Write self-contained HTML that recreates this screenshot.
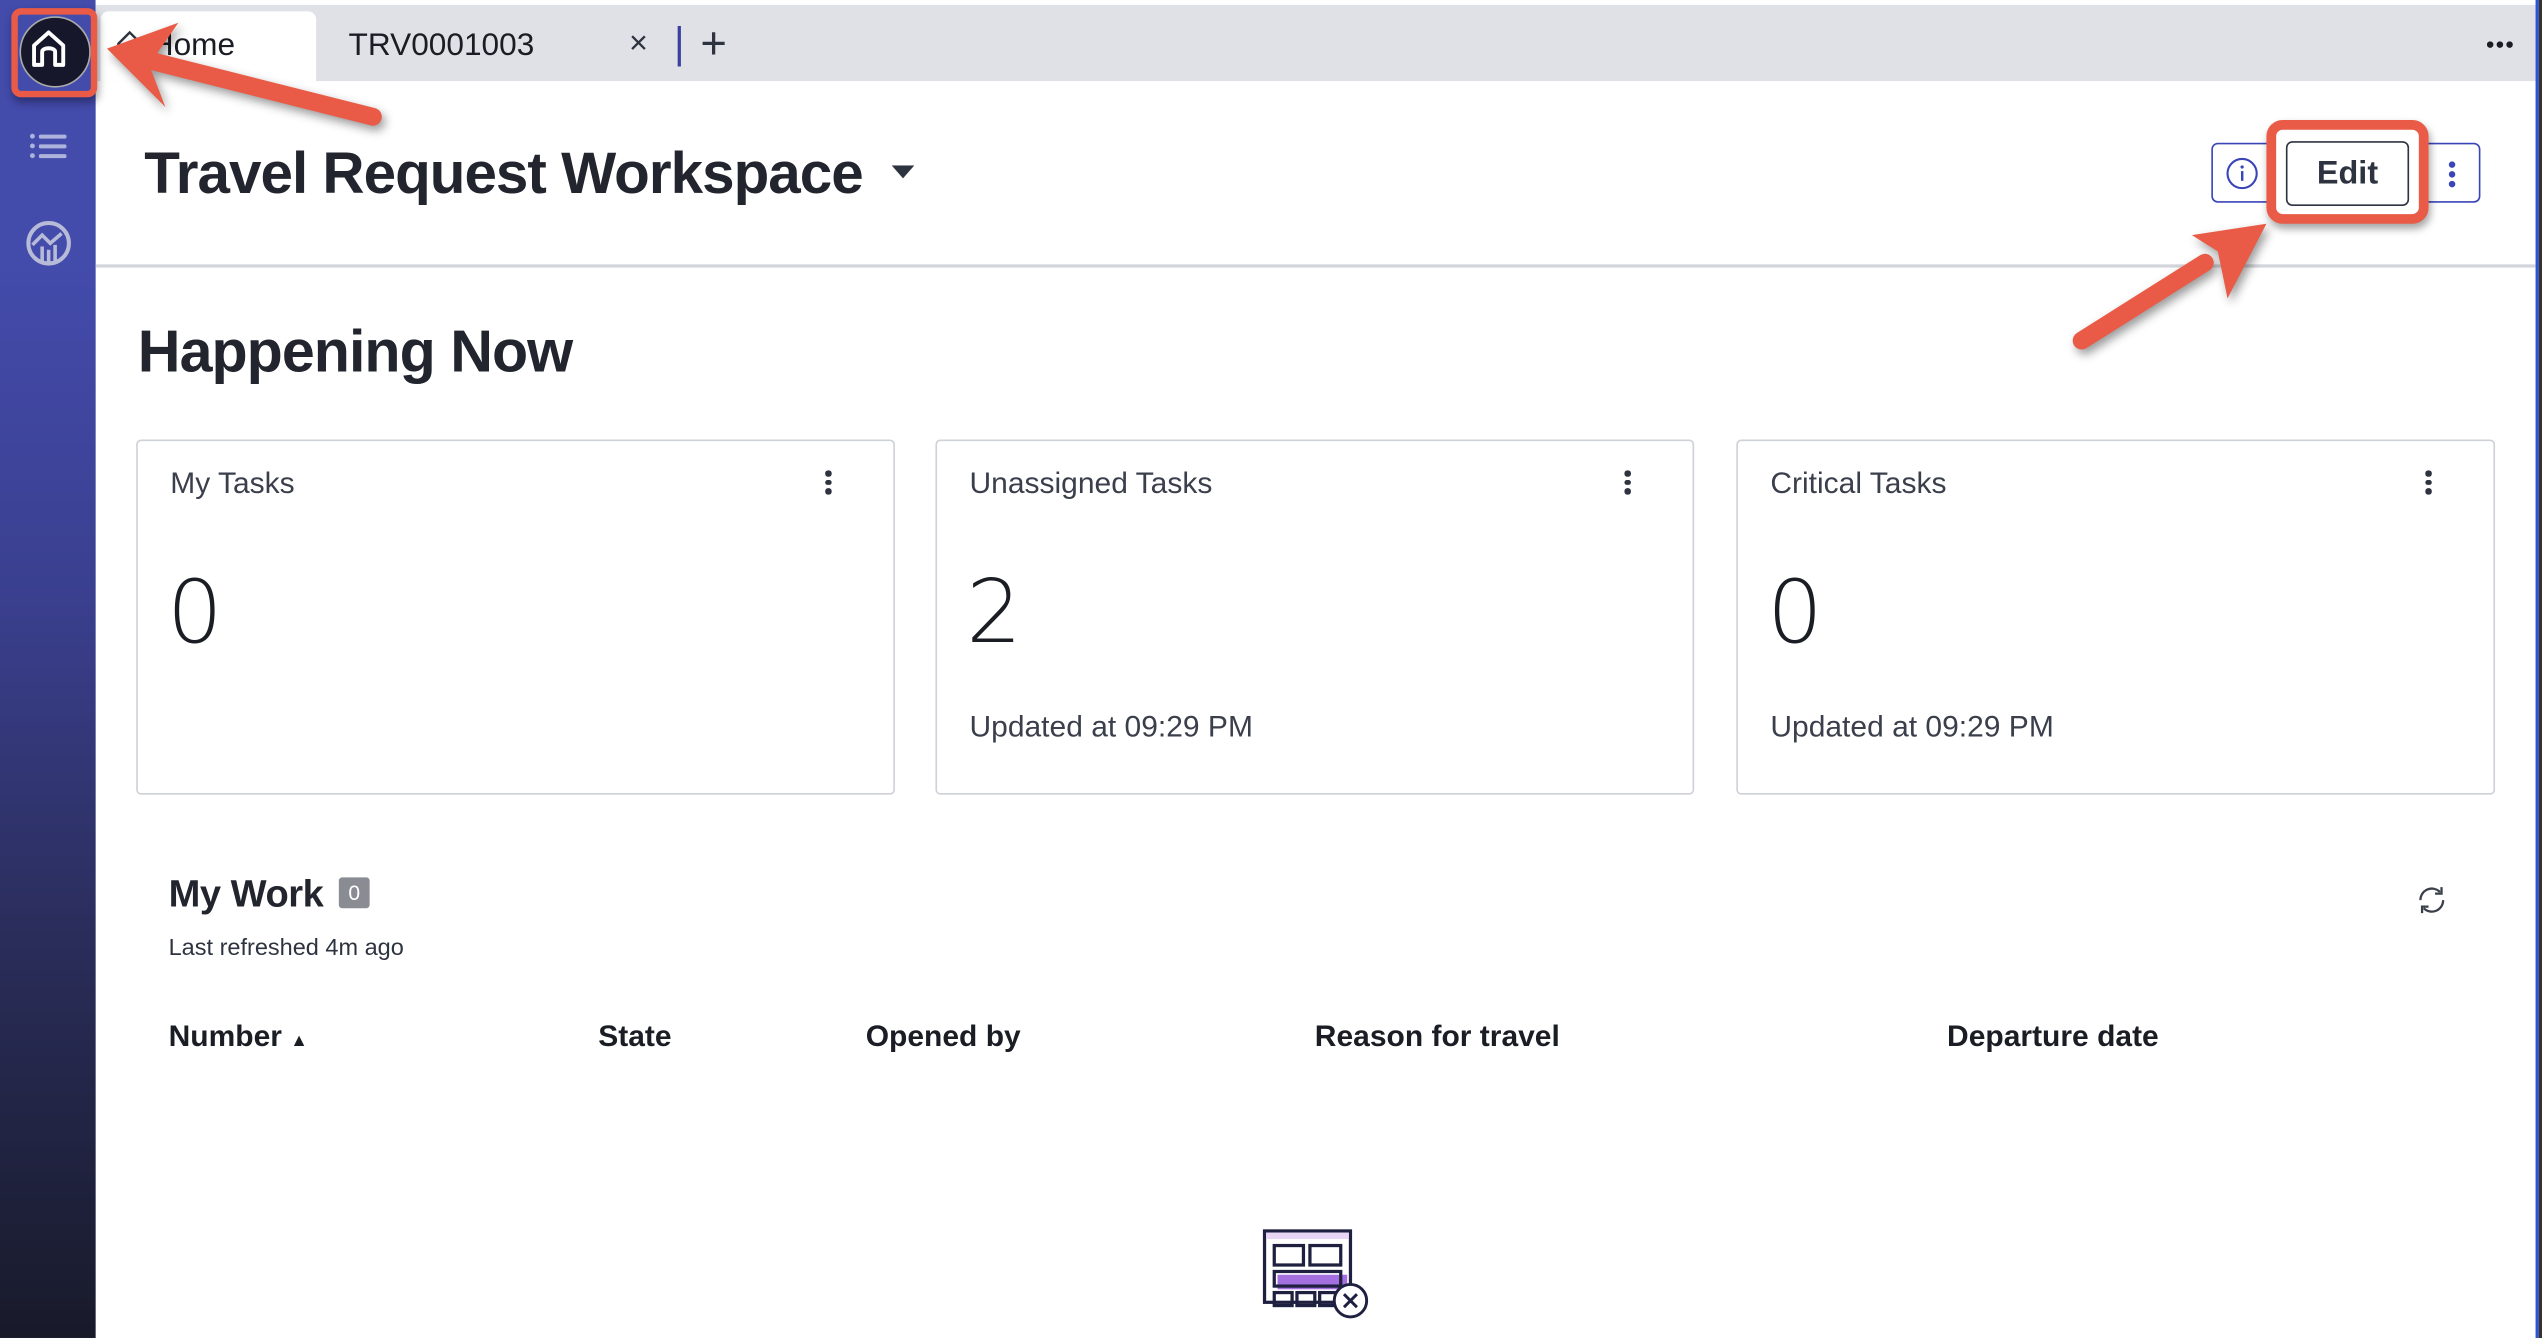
<!DOCTYPE html>
<html><head><meta charset="utf-8"><style>
html,body{margin:0;padding:0;width:2542px;height:1338px;overflow:hidden;background:#fff}
#w{position:absolute;left:0;top:0;width:1568px;height:825px;transform:scale(1.6212,1.6218);transform-origin:0 0;font-family:"Liberation Sans",sans-serif;color:#2e3340}
.a{position:absolute}
.card{position:absolute;top:271px;width:466px;height:217px;border:1px solid #cfd1d8;border-radius:3px;background:#fff}
.card .t{position:absolute;left:20px;top:15px;font-size:18.5px;color:#3a3f4b}
.card .n{position:absolute;left:18px;top:74px;font-size:54px;font-family:"DejaVu Sans","Liberation Sans",sans-serif;font-weight:200;color:#1b1d24}
.card .u{position:absolute;left:20px;top:165px;font-size:18.5px;color:#3a3f4b}
.card .d{position:absolute;right:38px;top:18px;width:4px}
.dots i{display:block;width:3.5px;height:3.5px;border-radius:50%;background:#2e3340;margin-bottom:2px}
.h{position:absolute;top:628px;font-size:18.5px;font-weight:bold;color:#1b1d24}
</style></head><body><div id="w">
<div class="a" style="left:0;top:0;width:59px;height:825px;background:linear-gradient(#434bab 0%,#434bab 20%,#3a3f8e 45%,#2a2d5a 70%,#181a2a 100%)"></div>
<div class="a" style="left:59px;top:0;width:1506px;height:3px;background:#fff"></div>
<div class="a" style="left:59px;top:3px;width:1506px;height:47px;background:#e0e1e7"></div>
<div class="a" style="left:1564px;top:0;width:2px;height:825px;background:#2f54d0"></div>
<div class="a" style="left:1566px;top:0;width:2px;height:825px;background:#333"></div>
<div class="a" style="left:62px;top:7px;width:133px;height:43px;background:#fff;border-radius:5px 5px 0 0"></div>
<svg class="a" style="left:70px;top:18px" width="20" height="20" viewBox="0 0 20 20"><path d="M3 18V9L10 2l7 7v9" fill="none" stroke="#2e3340" stroke-width="1.5"/></svg>
<div class="a" style="left:93px;top:17px;font-size:19.5px;color:#1b1d24">Home</div>
<div class="a" style="left:215px;top:17px;font-size:19.5px;color:#1b1d24">TRV0001003</div>
<div class="a" style="left:388px;top:16px;font-size:20px;color:#2e3340">×</div>
<div class="a" style="left:418px;top:16px;width:2px;height:25px;background:#3a40a0"></div>
<div class="a" style="left:432px;top:11px;font-size:28px;font-weight:300;color:#2e3340">+</div>
<svg class="a" style="left:1534px;top:25px" width="16" height="5"><g fill="#1b1d24"><circle cx="2" cy="2.5" r="2"/><circle cx="8" cy="2.5" r="2"/><circle cx="14" cy="2.5" r="2"/></g></svg>
<!-- sidebar icons -->
<div class="a" style="left:12px;top:10px;width:42px;height:42px;border-radius:50%;background:#16172a;border:1px solid #aaa"></div>
<svg class="a" style="left:16px;top:16px" width="28" height="28" viewBox="0 0 28 28"><path d="M5 24V12L14 4l9 8v12h-5v-8c0-3-8-3-8 0v8z" fill="none" stroke="#fff" stroke-width="2.4" stroke-linejoin="round"/></svg>
<svg class="a" style="left:17px;top:80px" width="26" height="20" viewBox="0 0 26 20"><g fill="#aeb3dd"><circle cx="3" cy="4" r="1.5"/><circle cx="3" cy="10" r="1.5"/><circle cx="3" cy="16" r="1.5"/><rect x="7" y="3" width="17" height="2.5" rx="1"/><rect x="7" y="9" width="17" height="2.5" rx="1"/><rect x="7" y="15" width="17" height="2.5" rx="1"/></g></svg>
<svg class="a" style="left:15px;top:135px" width="30" height="30" viewBox="0 0 30 30"><circle cx="15" cy="15" r="12.5" fill="none" stroke="#b8bbd8" stroke-width="2.5"/><path d="M5 16l6-6 5 5 7-6M11 26v-9M15 27v-8M19 26v-10" fill="none" stroke="#b8bbd8" stroke-width="2.2"/></svg>
<!-- title -->
<div class="a" style="left:89px;top:86px;font-size:36px;font-weight:bold;color:#22252e;letter-spacing:-0.6px">Travel Request Workspace</div>
<svg class="a" style="left:550px;top:102px" width="14" height="9"><path d="M0 0h14L7 8z" fill="#2e3340"/></svg>
<div class="a" style="left:59px;top:163px;width:1505px;height:2px;background:#d4d5dc"></div>
<!-- buttons -->
<div class="a" style="left:1364px;top:88px;width:166px;height:37px;border:1.5px solid #3a45b8;border-radius:4px;box-sizing:border-box"></div>
<svg class="a" style="left:1372px;top:96px" width="22" height="22"><circle cx="11" cy="11" r="9" fill="none" stroke="#3a45b8" stroke-width="1.3"/><rect x="10.3" y="9.5" width="1.5" height="6" fill="#3a45b8"/><circle cx="11" cy="7" r="1" fill="#3a45b8"/></svg>
<div class="a" style="left:1398px;top:74px;width:100px;height:64px;border:6px solid #e95b46;border-radius:10px;box-sizing:border-box;background:#fff;box-shadow:1px 3px 5px rgba(0,0,0,.35)"></div>
<div class="a" style="left:1410px;top:87px;width:76px;height:40px;border:1.3px solid #2e3340;border-radius:4px;box-sizing:border-box;text-align:center;line-height:38px;font-size:20px;font-weight:bold;color:#2e3340">Edit</div>
<div class="a" style="left:1510px;top:99px"><svg width="5" height="17"><g fill="#3a45b8"><circle cx="2.5" cy="2.5" r="2"/><circle cx="2.5" cy="8.5" r="2"/><circle cx="2.5" cy="14.5" r="2"/></g></svg></div>
<!-- happening -->
<div class="a" style="left:85px;top:196px;font-size:36.5px;font-weight:bold;color:#22252e;letter-spacing:-0.6px">Happening Now</div>
<div class="card" style="left:84px"><div class="t">My Tasks</div><div class="n">0</div><div class="d dots"><i></i><i></i><i></i></div></div>
<div class="card" style="left:577px"><div class="t">Unassigned Tasks</div><div class="n">2</div><div class="u">Updated at 09:29 PM</div><div class="d dots"><i></i><i></i><i></i></div></div>
<div class="card" style="left:1071px"><div class="t">Critical Tasks</div><div class="n">0</div><div class="u">Updated at 09:29 PM</div><div class="d dots"><i></i><i></i><i></i></div></div>
<!-- my work -->
<div class="a" style="left:104px;top:538px;font-size:23.5px;font-weight:bold;color:#22252e;letter-spacing:-0.3px">My Work</div>
<div class="a" style="left:209px;top:541px;width:19px;height:19px;background:#8a8c94;color:#fff;font-size:13px;text-align:center;line-height:19px;border-radius:2px">0</div>
<div class="a" style="left:104px;top:577px;font-size:14.5px;color:#2e3340">Last refreshed 4m ago</div>
<svg class="a" style="left:1489px;top:544px" width="22" height="22" viewBox="0 0 22 22"><path d="M4 11a7 7 0 0 1 12-5M18 11a7 7 0 0 1-12 5" fill="none" stroke="#3a3f4b" stroke-width="1.4"/><path d="M17 3v4h-4M5 19v-4h4" fill="none" stroke="#3a3f4b" stroke-width="1.4"/></svg>
<div class="h" style="left:104px">Number <span style="font-size:11px">▲</span></div>
<div class="h" style="left:369px">State</div>
<div class="h" style="left:534px">Opened by</div>
<div class="h" style="left:811px">Reason for travel</div>
<div class="h" style="left:1201px">Departure date</div>
<svg class="a" style="left:778px;top:757px" width="70" height="60" viewBox="0 0 70 60"><rect x="2" y="2" width="53" height="44" fill="#fff" stroke="#1f2040" stroke-width="2"/><rect x="3" y="3" width="51" height="4" fill="#e8d4f5"/><rect x="8" y="11" width="18" height="12" fill="none" stroke="#1f2040" stroke-width="2"/><rect x="30" y="11" width="19" height="12" fill="none" stroke="#1f2040" stroke-width="2"/><rect x="10" y="29" width="43" height="9" fill="#a470e0"/><rect x="8" y="27" width="41" height="9" fill="none" stroke="#1f2040" stroke-width="2"/><rect x="8" y="40" width="11" height="8" fill="none" stroke="#1f2040" stroke-width="2"/><rect x="22" y="40" width="11" height="8" fill="none" stroke="#1f2040" stroke-width="2"/><rect x="36" y="40" width="11" height="8" fill="none" stroke="#1f2040" stroke-width="2"/><circle cx="55" cy="45" r="10" fill="#fff" stroke="#1f2040" stroke-width="1.8"/><path d="M51 41l8 8M59 41l-8 8" stroke="#1f2040" stroke-width="1.8"/></svg>
<!-- red highlight home -->
<div class="a" style="left:7px;top:5px;width:53px;height:55px;border:4px solid #e95b46;border-radius:6px;box-sizing:border-box;box-shadow:1px 3px 5px rgba(0,0,0,.35)"></div>
<!-- arrows -->
<svg class="a" style="left:0;top:0;filter:drop-shadow(2px 3px 3px rgba(0,0,0,.4))" width="1568" height="825">
<path d="M230 72L95 38" stroke="#e95b46" stroke-width="11" stroke-linecap="round"/>
<path d="M66 30L110 14L92 40L102 66z" fill="#e95b46"/>
<path d="M1284 210L1360 162" stroke="#e95b46" stroke-width="11" stroke-linecap="round"/>
<path d="M1398 138L1352 145L1368 155L1374 184z" fill="#e95b46"/>
</svg>
</div></body></html>
